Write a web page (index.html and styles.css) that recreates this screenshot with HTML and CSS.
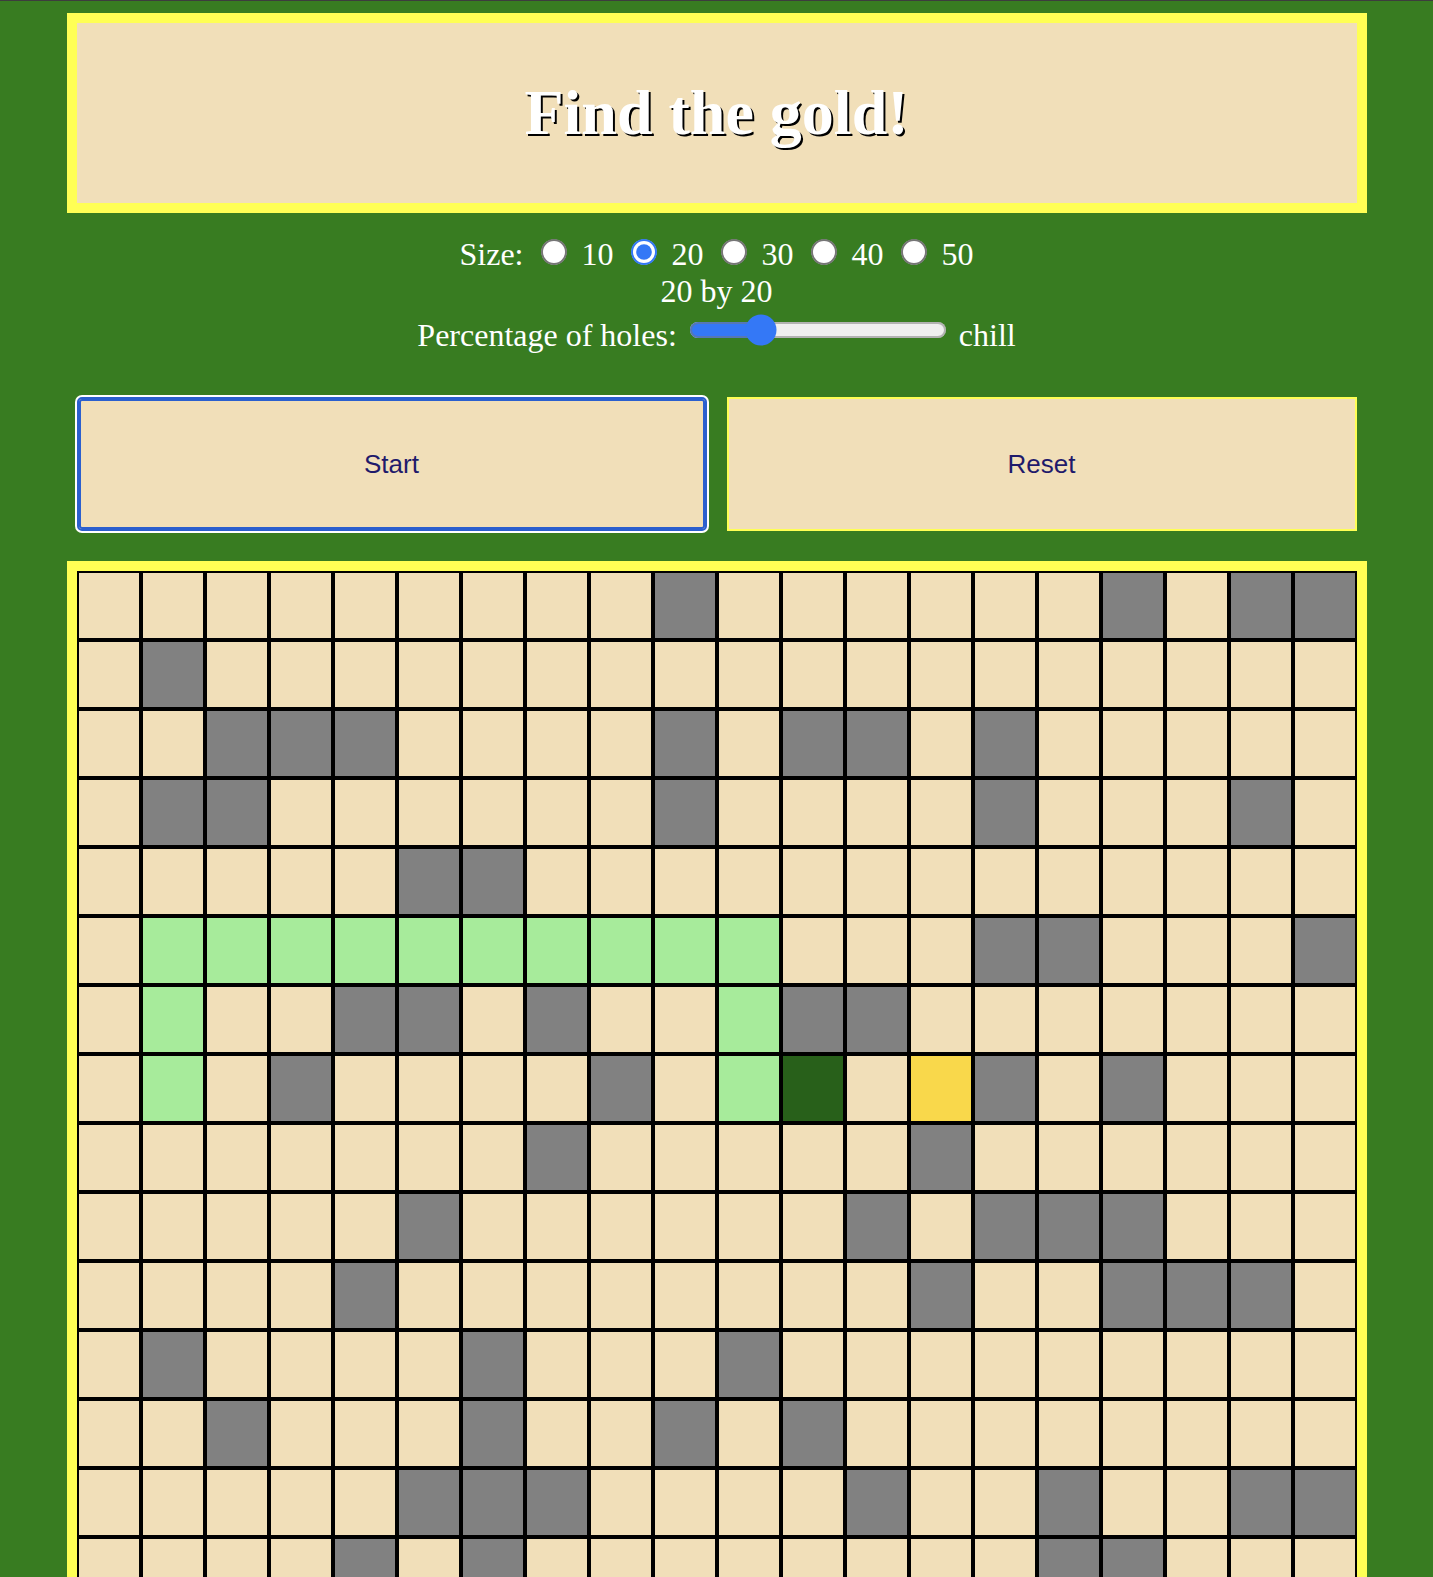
FILE: index.html
```html
<!DOCTYPE html>
<html lang="en">
<head>
<meta charset="utf-8">
<title>Find the gold!</title>
<link rel="stylesheet" href="styles.css">
</head>
<body>
<div class="page">
  <header class="title-box"><h1 class="title">Find the gold!</h1></header>
  <div class="controls">
    <div class="line">Size: <input type="radio" name="size"> 10 <input type="radio" name="size" checked> 20 <input type="radio" name="size"> 30 <input type="radio" name="size"> 40 <input type="radio" name="size"> 50</div>
    <div class="line">20 by 20</div>
    <div class="line">Percentage of holes: <input class="slider" type="range" min="0" max="100" value="25"> chill</div>
  </div>
  <div class="buttons">
    <button class="btn btn-focus">Start</button>
    <button class="btn">Reset</button>
  </div>
  <div class="board">
    <!-- row 0 -->
    <i class="c"></i><i class="c"></i><i class="c"></i><i class="c"></i><i class="c"></i><i class="c"></i><i class="c"></i><i class="c"></i><i class="c"></i><i class="c h"></i><i class="c"></i><i class="c"></i><i class="c"></i><i class="c"></i><i class="c"></i><i class="c"></i><i class="c h"></i><i class="c"></i><i class="c h"></i><i class="c h"></i>
    <!-- row 1 -->
    <i class="c"></i><i class="c h"></i><i class="c"></i><i class="c"></i><i class="c"></i><i class="c"></i><i class="c"></i><i class="c"></i><i class="c"></i><i class="c"></i><i class="c"></i><i class="c"></i><i class="c"></i><i class="c"></i><i class="c"></i><i class="c"></i><i class="c"></i><i class="c"></i><i class="c"></i><i class="c"></i>
    <!-- row 2 -->
    <i class="c"></i><i class="c"></i><i class="c h"></i><i class="c h"></i><i class="c h"></i><i class="c"></i><i class="c"></i><i class="c"></i><i class="c"></i><i class="c h"></i><i class="c"></i><i class="c h"></i><i class="c h"></i><i class="c"></i><i class="c h"></i><i class="c"></i><i class="c"></i><i class="c"></i><i class="c"></i><i class="c"></i>
    <!-- row 3 -->
    <i class="c"></i><i class="c h"></i><i class="c h"></i><i class="c"></i><i class="c"></i><i class="c"></i><i class="c"></i><i class="c"></i><i class="c"></i><i class="c h"></i><i class="c"></i><i class="c"></i><i class="c"></i><i class="c"></i><i class="c h"></i><i class="c"></i><i class="c"></i><i class="c"></i><i class="c h"></i><i class="c"></i>
    <!-- row 4 -->
    <i class="c"></i><i class="c"></i><i class="c"></i><i class="c"></i><i class="c"></i><i class="c h"></i><i class="c h"></i><i class="c"></i><i class="c"></i><i class="c"></i><i class="c"></i><i class="c"></i><i class="c"></i><i class="c"></i><i class="c"></i><i class="c"></i><i class="c"></i><i class="c"></i><i class="c"></i><i class="c"></i>
    <!-- row 5 -->
    <i class="c"></i><i class="c p"></i><i class="c p"></i><i class="c p"></i><i class="c p"></i><i class="c p"></i><i class="c p"></i><i class="c p"></i><i class="c p"></i><i class="c p"></i><i class="c p"></i><i class="c"></i><i class="c"></i><i class="c"></i><i class="c h"></i><i class="c h"></i><i class="c"></i><i class="c"></i><i class="c"></i><i class="c h"></i>
    <!-- row 6 -->
    <i class="c"></i><i class="c p"></i><i class="c"></i><i class="c"></i><i class="c h"></i><i class="c h"></i><i class="c"></i><i class="c h"></i><i class="c"></i><i class="c"></i><i class="c p"></i><i class="c h"></i><i class="c h"></i><i class="c"></i><i class="c"></i><i class="c"></i><i class="c"></i><i class="c"></i><i class="c"></i><i class="c"></i>
    <!-- row 7 -->
    <i class="c"></i><i class="c p"></i><i class="c"></i><i class="c h"></i><i class="c"></i><i class="c"></i><i class="c"></i><i class="c"></i><i class="c h"></i><i class="c"></i><i class="c p"></i><i class="c s"></i><i class="c"></i><i class="c g"></i><i class="c h"></i><i class="c"></i><i class="c h"></i><i class="c"></i><i class="c"></i><i class="c"></i>
    <!-- row 8 -->
    <i class="c"></i><i class="c"></i><i class="c"></i><i class="c"></i><i class="c"></i><i class="c"></i><i class="c"></i><i class="c h"></i><i class="c"></i><i class="c"></i><i class="c"></i><i class="c"></i><i class="c"></i><i class="c h"></i><i class="c"></i><i class="c"></i><i class="c"></i><i class="c"></i><i class="c"></i><i class="c"></i>
    <!-- row 9 -->
    <i class="c"></i><i class="c"></i><i class="c"></i><i class="c"></i><i class="c"></i><i class="c h"></i><i class="c"></i><i class="c"></i><i class="c"></i><i class="c"></i><i class="c"></i><i class="c"></i><i class="c h"></i><i class="c"></i><i class="c h"></i><i class="c h"></i><i class="c h"></i><i class="c"></i><i class="c"></i><i class="c"></i>
    <!-- row 10 -->
    <i class="c"></i><i class="c"></i><i class="c"></i><i class="c"></i><i class="c h"></i><i class="c"></i><i class="c"></i><i class="c"></i><i class="c"></i><i class="c"></i><i class="c"></i><i class="c"></i><i class="c"></i><i class="c h"></i><i class="c"></i><i class="c"></i><i class="c h"></i><i class="c h"></i><i class="c h"></i><i class="c"></i>
    <!-- row 11 -->
    <i class="c"></i><i class="c h"></i><i class="c"></i><i class="c"></i><i class="c"></i><i class="c"></i><i class="c h"></i><i class="c"></i><i class="c"></i><i class="c"></i><i class="c h"></i><i class="c"></i><i class="c"></i><i class="c"></i><i class="c"></i><i class="c"></i><i class="c"></i><i class="c"></i><i class="c"></i><i class="c"></i>
    <!-- row 12 -->
    <i class="c"></i><i class="c"></i><i class="c h"></i><i class="c"></i><i class="c"></i><i class="c"></i><i class="c h"></i><i class="c"></i><i class="c"></i><i class="c h"></i><i class="c"></i><i class="c h"></i><i class="c"></i><i class="c"></i><i class="c"></i><i class="c"></i><i class="c"></i><i class="c"></i><i class="c"></i><i class="c"></i>
    <!-- row 13 -->
    <i class="c"></i><i class="c"></i><i class="c"></i><i class="c"></i><i class="c"></i><i class="c h"></i><i class="c h"></i><i class="c h"></i><i class="c"></i><i class="c"></i><i class="c"></i><i class="c"></i><i class="c h"></i><i class="c"></i><i class="c"></i><i class="c h"></i><i class="c"></i><i class="c"></i><i class="c h"></i><i class="c h"></i>
    <!-- row 14 -->
    <i class="c"></i><i class="c"></i><i class="c"></i><i class="c"></i><i class="c h"></i><i class="c"></i><i class="c h"></i><i class="c"></i><i class="c"></i><i class="c"></i><i class="c"></i><i class="c"></i><i class="c"></i><i class="c"></i><i class="c"></i><i class="c h"></i><i class="c h"></i><i class="c"></i><i class="c"></i><i class="c"></i>
    <!-- row 15 -->
    <i class="c"></i><i class="c"></i><i class="c"></i><i class="c h"></i><i class="c"></i><i class="c"></i><i class="c"></i><i class="c"></i><i class="c"></i><i class="c h"></i><i class="c"></i><i class="c"></i><i class="c"></i><i class="c"></i><i class="c"></i><i class="c"></i><i class="c"></i><i class="c h"></i><i class="c"></i><i class="c"></i>
    <!-- row 16 -->
    <i class="c"></i><i class="c"></i><i class="c"></i><i class="c"></i><i class="c"></i><i class="c"></i><i class="c"></i><i class="c h"></i><i class="c"></i><i class="c"></i><i class="c"></i><i class="c"></i><i class="c"></i><i class="c h"></i><i class="c"></i><i class="c"></i><i class="c"></i><i class="c"></i><i class="c"></i><i class="c"></i>
    <!-- row 17 -->
    <i class="c h"></i><i class="c"></i><i class="c"></i><i class="c"></i><i class="c"></i><i class="c"></i><i class="c"></i><i class="c"></i><i class="c"></i><i class="c"></i><i class="c"></i><i class="c h"></i><i class="c"></i><i class="c"></i><i class="c"></i><i class="c"></i><i class="c"></i><i class="c"></i><i class="c"></i><i class="c"></i>
    <!-- row 18 -->
    <i class="c"></i><i class="c"></i><i class="c"></i><i class="c"></i><i class="c"></i><i class="c h"></i><i class="c"></i><i class="c"></i><i class="c"></i><i class="c"></i><i class="c"></i><i class="c"></i><i class="c"></i><i class="c"></i><i class="c"></i><i class="c h"></i><i class="c"></i><i class="c"></i><i class="c"></i><i class="c"></i>
    <!-- row 19 -->
    <i class="c"></i><i class="c"></i><i class="c h"></i><i class="c"></i><i class="c"></i><i class="c"></i><i class="c"></i><i class="c"></i><i class="c"></i><i class="c"></i><i class="c h"></i><i class="c"></i><i class="c"></i><i class="c"></i><i class="c"></i><i class="c"></i><i class="c"></i><i class="c"></i><i class="c h"></i><i class="c"></i>
  </div>
</div>
</body>
</html>
```

FILE: styles.css
```css
html, body {
  margin: 0;
  padding: 0;
}

body {
  background: #387c21;
  border-top: 1px solid #3d3d3d;
  font-family: "Liberation Serif", "Times New Roman", serif;
  color: #ffffff;
}

.page {
  width: 1300px;
  margin: 0 auto;
  padding-top: 12px;
}

.title-box {
  height: 200px;
  box-sizing: border-box;
  border: 10px solid #ffff55;
  background: #f1dfb9;
  display: flex;
  align-items: center;
  justify-content: center;
}

.title {
  margin: 0;
  font-size: 64px;
  font-weight: bold;
  color: #ffffff;
  text-shadow: 2px 2px 0 #000000;
}

.controls {
  margin-top: 20px;
  text-align: center;
  font-size: 32px;
}

.controls input {
  zoom: 2;
  accent-color: #3478f6;
}

.controls .slider {
  vertical-align: baseline;
}

.buttons {
  display: flex;
  gap: 20px;
  padding: 0 10px;
  margin-top: 43px;
}

.btn {
  flex: 1;
  height: 134px;
  box-sizing: border-box;
  background: #f1dfb9;
  border: 2px solid #ffff55;
  color: #1f1a6b;
  font-family: "Liberation Sans", Arial, sans-serif;
  font-size: 26px;
  padding: 0;
}

.btn-focus {
  border-color: #2b5fce;
  border-radius: 5px;
  box-shadow: inset 0 0 0 2px #2b5fce, 0 0 0 2px #ffffff;
}

.board {
  margin-top: 30px;
  border: 10px solid #ffff55;
  display: grid;
  grid-template-columns: repeat(20, 64px);
  grid-auto-rows: 69px;
}

.c {
  display: block;
  box-sizing: border-box;
  border: 2px solid #000000;
  background: #f1dfb9;
}

.c.h { background: #818181; }
.c.p { background: #a7eb9b; }
.c.s { background: #28601a; }
.c.g { background: #f9d84b; }
```
